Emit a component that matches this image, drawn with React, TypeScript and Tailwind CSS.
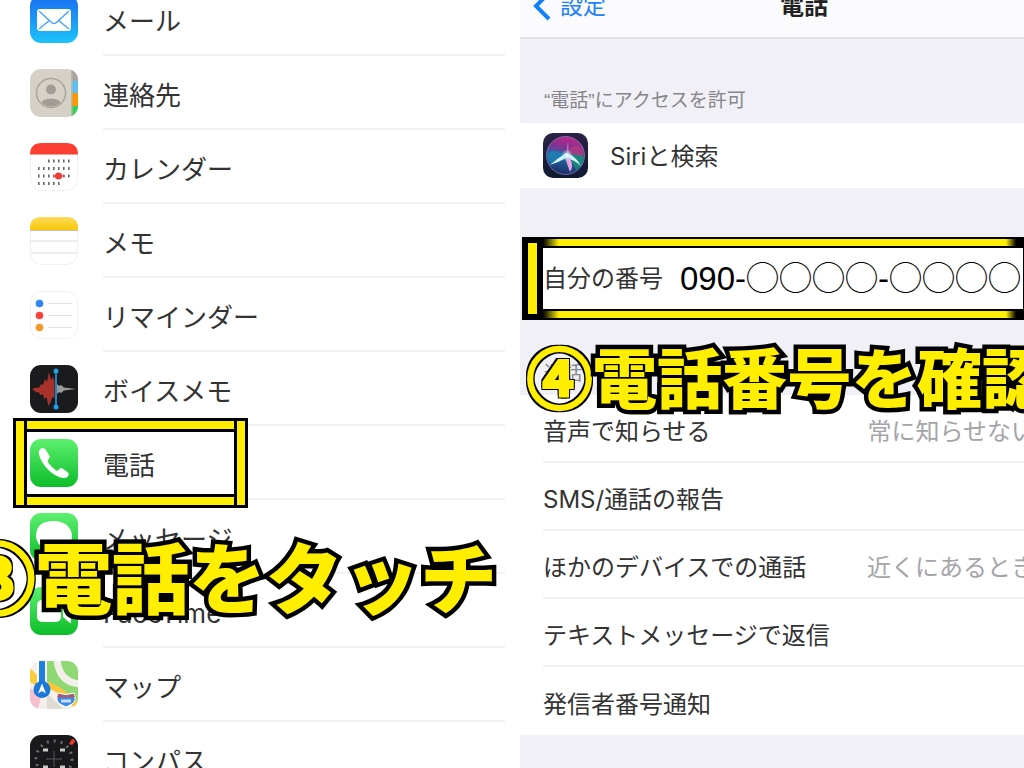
import type { ReactNode } from "react";

const MailIcon = () => (
  <svg viewBox="0 0 48 48" className="w-12 h-12">
    <defs>
      <linearGradient id="mail" x1="0" y1="0" x2="0" y2="1">
        <stop offset="0" stopColor="#1a6cf0" />
        <stop offset="1" stopColor="#1cc3fb" />
      </linearGradient>
    </defs>
    <rect width="48" height="48" rx="11" fill="url(#mail)" />
    <rect x="7" y="14" width="34" height="22" rx="3" fill="#fff" />
    <path
      d="M9 16l12 11q3 3 6 0l12-11M9 34l11-9M39 34l-11-9"
      fill="none"
      stroke="#4aa5f5"
      strokeWidth="1.5"
    />
  </svg>
);

const ContactsIcon = () => (
  <svg viewBox="0 0 48 48" className="w-12 h-12">
    <defs>
      <clipPath id="contacts">
        <rect width="48" height="48" rx="11" />
      </clipPath>
      <clipPath id="face">
        <circle cx="21" cy="24" r="13.5" />
      </clipPath>
    </defs>
    <g clipPath="url(#contacts)">
      <rect width="48" height="48" fill="#d5d1c7" />
      <rect x="42" width="6" height="12" fill="#aaa69e" />
      <rect x="42" y="12" width="6" height="12" fill="#5cc0f5" />
      <rect x="42" y="24" width="6" height="13" fill="#ff9500" />
      <rect x="42" y="37" width="6" height="11" fill="#35cf55" />
      <rect x="41" width="1.5" height="48" fill="#bab6ac" />
    </g>
    <circle cx="21" cy="24" r="14.5" fill="none" stroke="#aaa59d" strokeWidth="1.5" />
    <circle cx="21" cy="20.5" r="5" fill="#a19c95" />
    <ellipse cx="21" cy="35" rx="10" ry="5.5" fill="#a19c95" clipPath="url(#face)" />
  </svg>
);

const CalendarIcon = () => (
  <svg viewBox="0 0 48 48" className="w-12 h-12">
    <rect x="0.5" y="0.5" width="47" height="47" rx="11" fill="#fff" stroke="#f0f0f0" />
    <path d="M0 11.500Q0 0 12 0h24q12 0 12 11.500z" fill="#fc3d32" />
    <g stroke="#666" strokeWidth="3" strokeDasharray="1.600 3.400">
      <path d="M18 18h24M8 25.500h34M8 33h34M8 40.500h24" />
    </g>
    <path d="M23 33h12" stroke="#f4534b" strokeWidth="1.500" />
    <circle cx="28.500" cy="33" r="3.500" fill="#f23b31" />
  </svg>
);

const NotesIcon = () => (
  <svg viewBox="0 0 48 48" className="w-12 h-12">
    <defs>
      <linearGradient id="notes" x1="0" y1="0" x2="0" y2="1">
        <stop offset="0" stopColor="#fcdb5a" />
        <stop offset="1" stopColor="#f8c907" />
      </linearGradient>
    </defs>
    <rect x="0.5" y="0.5" width="47" height="47" rx="11" fill="#fff" stroke="#f0f0f0" />
    <path d="M0 13V11Q0 0 12 0h24q12 0 12 11v2z" fill="url(#notes)" />
    <path d="M0 13.500h48" stroke="#c4beac" />
    <path d="M1 24h46M1 36h46" stroke="#dcdcdc" />
  </svg>
);

const RemindersIcon = () => (
  <svg viewBox="0 0 48 48" className="w-12 h-12">
    <rect x="0.5" y="0.5" width="47" height="47" rx="11" fill="#fff" stroke="#f0f0f0" />
    <circle cx="9.500" cy="12.500" r="3.800" fill="#2f86f5" />
    <circle cx="9.500" cy="24.500" r="3.800" fill="#fb433c" />
    <circle cx="9.500" cy="36.500" r="3.800" fill="#f79a24" />
    <path d="M18 12.500h24M18 24.500h24M18 36.500h24" stroke="#dfdfdf" />
  </svg>
);

const VoiceMemoIcon = () => (
  <svg viewBox="0 0 48 48" className="w-12 h-12">
    <rect width="48" height="48" rx="11" fill="#1b1b1d" />
    <path
      d="M2 24l5-1.500 2 .5 2-4 2 1 2-6 2 3 2-10 2 8 2-3 1.500 4v17l-2-1-2 5-2 4-2-9-2 2-2-5-2 1-2-3-2 .5z"
      fill="#a8312c"
    />
    <path d="M27 19l2 2 2-1 3 2.500 4 .5 8 1-8 1-4 .5-3 2.500-2-1-2 2z" fill="#9b9b9b" />
    <path d="M26 6v36" stroke="#1d8fd6" strokeWidth="1.800" />
    <circle cx="26" cy="6" r="2.500" fill="#1da3e8" />
    <circle cx="26" cy="42" r="2.500" fill="#1da3e8" />
  </svg>
);

const GreenDefs = ({ id }: { id: string }) => (
  <defs>
    <linearGradient id={id} x1="0" y1="0" x2="0" y2="1">
      <stop offset="0" stopColor="#5df070" />
      <stop offset="1" stopColor="#0dbd29" />
    </linearGradient>
  </defs>
);

const PhoneIcon = () => (
  <svg viewBox="0 0 48 48" className="w-12 h-12">
    <GreenDefs id="phone" />
    <rect width="48" height="48" rx="11" fill="url(#phone)" />
    <path
      d="M11 9.500q-3 2-2 6 2 8 9 15t15 8.500q4 .5 5.500-2.500 1-2-1-3.500l-5-3.500q-1.500-1-3 .5l-1.500 1.500q-1 .5-2.500-.5-4-3-7-7-1.500-2-.5-3l1-1.500q1-1 .5-2.500l-4-6.500q-2-2.500-4.500-1z"
      fill="#fff"
    />
  </svg>
);

const MessagesIcon = () => (
  <svg viewBox="0 0 48 48" className="w-12 h-12">
    <GreenDefs id="messages" />
    <rect width="48" height="48" rx="11" fill="url(#messages)" />
    <path
      d="M24 8c10.500 0 18 6.500 18 15s-7.500 15-18 15q-3 0-5.500-.7-3 2.700-7.500 2.700 2.500-2.500 2.500-5Q6 30 6 23 6 8 24 8z"
      fill="#fff"
    />
  </svg>
);

const FaceTimeIcon = () => (
  <svg viewBox="0 0 48 48" className="w-12 h-12">
    <GreenDefs id="facetime" />
    <rect width="48" height="48" rx="11" fill="url(#facetime)" />
    <rect x="7" y="13" width="24" height="22" rx="5" fill="#fff" />
    <path d="M33 22l7-6q1-.5 1 1v18q0 1.500-1 1l-7-6z" fill="#fff" />
  </svg>
);

const MapsIcon = () => (
  <svg viewBox="0 0 48 48" className="w-12 h-12">
    <defs>
      <clipPath id="maps">
        <rect width="48" height="48" rx="11" />
      </clipPath>
    </defs>
    <g clipPath="url(#maps)">
      <rect width="48" height="48" fill="#f3f0ea" />
      <path d="M17 0h31v48Q38 30 17 21z" fill="#8fd873" />
      <path d="M27-2q2 24 24 25" fill="none" stroke="#f3f0ea" strokeWidth="7" />
      <path d="M0 7l7 7v11l-7-4z" fill="#fbcb3f" />
      <path d="M0 27l11 9-3 12H0z" fill="#f6bfcd" />
      <path d="M17 23q18 8 31 23" fill="none" stroke="#fbc63b" strokeWidth="6" />
      <path d="M17 32l16 16H17z" fill="#dedbd4" />
      <path d="M12 0v28" stroke="#fff" strokeWidth="10" />
      <path d="M12 0v24" stroke="#1e7fe2" strokeWidth="6" />
    </g>
    <circle cx="12" cy="28.500" r="8.500" fill="#1978d8" />
    <path d="M12 22.500l4 10-4-2.500-4 2.500z" fill="#fff" />
    <path d="M28 32q8 3 16 0 3 8-2 11l-6 3-6-3q-5-3-2-11z" fill="#3988e4" stroke="#fff" />
    <path d="M28 33q8 3 16 0l.5 3h-17z" fill="#e2443f" />
    <path d="M31 40h10" stroke="#c8ddf6" strokeWidth="3" />
  </svg>
);

const CompassIcon = () => (
  <svg viewBox="0 0 48 48" className="w-12 h-12">
    <rect width="48" height="48" rx="11" fill="#19191b" />
    <circle
      cx="24"
      cy="24"
      r="18"
      fill="none"
      stroke="#6b6b6d"
      strokeWidth="3"
      strokeDasharray="2 5"
    />
    <path d="M24 16v16M16 24h16" stroke="#58585a" />
    <path d="M13 15h5M30 15h5M13 32h5M30 32h5" stroke="#c9c9c9" strokeWidth="3" />
    <path d="M39 9l3-5q3 0 3 3l-3 3z" fill="#f03a30" />
  </svg>
);

const SiriIcon = () => (
  <svg viewBox="0 0 45 45" className="w-[45px] h-[45px]">
    <defs>
      <linearGradient id="siri-bg" x1="0" y1="0" x2="0" y2="1">
        <stop offset="0" stopColor="#2b2246" />
        <stop offset="1" stopColor="#101a33" />
      </linearGradient>
      <linearGradient id="siri-orb" x1="0.6" y1="0" x2="0.4" y2="1">
        <stop offset="0" stopColor="#c0268c" />
        <stop offset="0.3" stopColor="#7e3391" />
        <stop offset="0.55" stopColor="#1f6aa4" />
        <stop offset="1" stopColor="#1d2b66" />
      </linearGradient>
      <radialGradient id="siri-glow">
        <stop offset="0" stopColor="#fff" />
        <stop offset="1" stopColor="#7fe6f5" stopOpacity="0" />
      </radialGradient>
    </defs>
    <rect width="45" height="45" rx="10" fill="url(#siri-bg)" />
    <circle cx="22.500" cy="22.500" r="19" fill="url(#siri-orb)" stroke="#8a86b5" strokeOpacity="0.7" />
    <path d="M23 22Q30 8 38 15q3 4 2 9-8-4-17-2z" fill="#c93a78" fillOpacity="0.6" />
    <path d="M23 23q11-3 18 1-1 8-8 13-3-8-10-14z" fill="#178f70" fillOpacity="0.8" />
    <path d="M23 22Q10 14 5 21q-1 6 3 11 5-7 15-10z" fill="#1b86b8" fillOpacity="0.7" />
    <path d="M23 20Q15 25 7 32q9-3 16-7 9 2 15 8-4-8-13-13z" fill="#cdf6fa" />
    <path d="M22 24q2 7 5 15 4-6 0-14z" fill="#e9a0e0" />
    <path d="M23 22l2-14 1 14z" fill="#e58ac8" fillOpacity="0.7" />
    <circle cx="24" cy="22.500" r="6" fill="url(#siri-glow)" />
  </svg>
);

const apps = [
  { label: "メール", icon: <MailIcon /> },
  { label: "連絡先", icon: <ContactsIcon /> },
  { label: "カレンダー", icon: <CalendarIcon /> },
  { label: "メモ", icon: <NotesIcon /> },
  { label: "リマインダー", icon: <RemindersIcon /> },
  { label: "ボイスメモ", icon: <VoiceMemoIcon /> },
  { label: "電話", icon: <PhoneIcon />, marked: true },
  { label: "メッセージ", icon: <MessagesIcon /> },
  { label: "FaceTime", icon: <FaceTimeIcon /> },
  { label: "マップ", icon: <MapsIcon /> },
  { label: "コンパス", icon: <CompassIcon /> },
];

const callSettings = [
  { label: "音声で知らせる", value: "常に知らせない" },
  { label: "SMS/通話の報告" },
  { label: "ほかのデバイスでの通話", value: "近くにあるとき" },
  { label: "テキストメッセージで返信" },
  { label: "発信者番号通知" },
];

const PhoneFrame = () => (
  <div className="absolute -top-2 -bottom-2 left-[13px] w-[235px] flex pointer-events-none">
    <div className="w-[14px] bg-[#ffee00] border-[3px] border-black"></div>
    <div className="flex-1 flex flex-col justify-between">
      <div className="h-[14px] bg-[#ffee00] border-y-[3px] border-black"></div>
      <div className="h-[14px] bg-[#ffee00] border-y-[3px] border-black"></div>
    </div>
    <div className="w-[14px] bg-[#ffee00] border-[3px] border-black"></div>
  </div>
);

const NumberBar = () => (
  <div className="h-[11px] bg-linear-[to_right,black,#ffee00_16px,#ffee00_calc(100%-18px),black_calc(100%-8px)] border-y-2 border-black"></div>
);

type CaptionProps = { step: string; className: string; children: ReactNode };

const Caption = ({ step, className, children }: CaptionProps) => (
  <p
    className={`absolute z-10 whitespace-nowrap leading-none font-black font-['Noto_Sans_CJK_JP',sans-serif] text-[#ffee00] ${className}`}
  >
    {/* heavier ring than the glyph has */}
    <span className="font-medium [-webkit-text-stroke:4px_#ffee00] [text-shadow:3px_0_black,-3px_0_black,0_3px_black,0_-3px_black,3px_3px_black,-3px_3px_black,3px_-3px_black,-3px_-3px_black]">
      {step}
    </span>
    <span className="[-webkit-text-stroke:9px_black] [paint-order:stroke_fill]">{children}</span>
  </p>
);

const AppList = () => (
  <section className="relative min-w-0">
    <ul className="-mt-[18px]">
      {apps.map((app) => (
        <li key={app.label} className="relative">
          <a href="#" className="flex items-center h-[74px] pl-[30px] gap-[25px]">
            {app.icon}
            <span className="flex-1 h-full pt-1.5 flex items-center border-b-2 border-[#f1f1f1] text-[26px] text-[#333]">
              {app.label}
            </span>
          </a>
          {app.marked && <PhoneFrame />}
        </li>
      ))}
    </ul>
    <Caption step="③" className="top-[536px] -left-[42px] text-[77px]">
      電話をタッチ
    </Caption>
  </section>
);

const PhoneSettings = () => (
  <section className="relative min-w-0 bg-[#f1f0f6] text-[24px] text-[#333]">
    {/* Nav bar */}
    <header className="relative min-w-[568px] h-[39px] bg-[#fbfbfd] border-b-2 border-[#e3e2e7]">
      <button className="absolute -top-3 left-3 h-9 flex items-center gap-2 text-[23px] text-[#1a80fb]">
        <svg viewBox="0 0 20 32" className="w-5 h-8">
          <path d="M17 3L4 16l13 13" fill="none" stroke="#1180fa" strokeWidth="4" />
        </svg>
        設定
      </button>
      <h1 className="absolute -top-3 w-full h-9 leading-9 text-center font-bold text-[#222]">
        電話
      </h1>
    </header>

    <h2 className="h-[84px] pt-12 pl-6 text-[19px] leading-[28px] text-[#85858a] font-['Liberation_Sans','Noto_Sans_CJK_JP',sans-serif]">
      “電話”にアクセスを許可
    </h2>
    <a href="#" className="flex items-center h-[65px] pl-[23px] gap-[22px] bg-white">
      <SiriIcon />
      <span className="pt-0.5">Siriと検索</span>
    </a>

    {/* My number */}
    <div className="mt-[49px] ml-[2px] h-[83px] flex">
      <div className="w-[21px] bg-[#ffee00] border-6 border-black"></div>
      <div className="flex-1 min-w-0 flex flex-col">
        <NumberBar />
        <div className="flex-1 flex items-center gap-[17px] bg-white border-r border-black whitespace-nowrap">
          <span>自分の番号</span>
          <span className="text-[33px] leading-none text-black font-['Liberation_Sans','Noto_Sans_CJK_JP',sans-serif]">
            090-◯◯◯◯-◯◯◯◯
          </span>
        </div>
        <NumberBar />
      </div>
    </div>

    <h2 className="h-[75px] pt-10 pl-6 text-[19px] leading-[28px] text-[#85858a]">通話</h2>
    <ul className="min-w-[568px] bg-white pl-[23px]">
      {callSettings.map((item) => (
        <li key={item.label} className="h-[68px] border-b-2 border-[#f1f1f3] last:border-0">
          <a href="#" className="flex items-center justify-between h-full pt-2 pr-[53px]">
            <span>{item.label}</span>
            {item.value && <span className="text-[#a4a4a9]">{item.value}</span>}
          </a>
        </li>
      ))}
    </ul>
    <Caption step="④" className="top-[343px] left-[7px] text-[65px]">
      電話番号を確認
    </Caption>
  </section>
);

const App = () => {
  return (
    <main className="h-screen overflow-hidden grid grid-cols-[505fr_504fr] gap-[15px] bg-white font-[Inter,'Noto_Sans_CJK_JP',sans-serif]">
      <AppList />
      <PhoneSettings />
    </main>
  );
};

export default App;
